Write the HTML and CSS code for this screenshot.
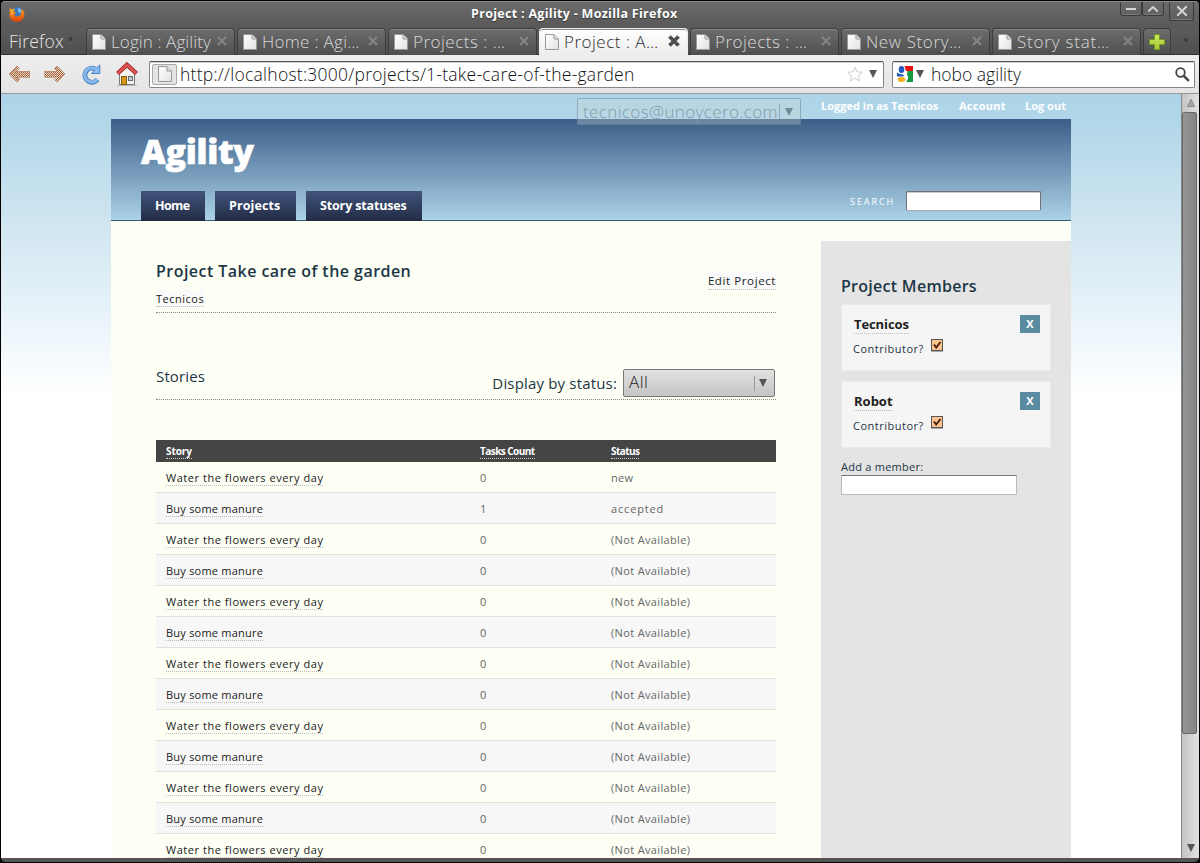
FILE: index.html
```html
<!DOCTYPE html>
<html lang="en">
<head>
<meta charset="utf-8">
<title>Project : Agility</title>
<link rel="stylesheet" href="styles.css">
</head>
<body>
<svg class="defs" width="0" height="0" aria-hidden="true">
  <defs>
    <linearGradient id="paper" x1="0" y1="0" x2="1" y2="1"><stop offset="0" stop-color="#fff"/><stop offset="1" stop-color="#e2e2e2"/></linearGradient>
    <linearGradient id="fox" x1="0" y1="0" x2="0" y2="1"><stop offset="0" stop-color="#f5a623"/><stop offset="1" stop-color="#d8430c"/></linearGradient>
    <linearGradient id="plus" x1="0" y1="0" x2="0" y2="1"><stop offset="0" stop-color="#d0e85c"/><stop offset="1" stop-color="#a4c832"/></linearGradient>
    <pattern id="dither" width="2" height="2" patternUnits="userSpaceOnUse"><rect width="2" height="2" fill="#ead6c6"/><rect width="1" height="1" fill="#a0603c"/><rect x="1" y="1" width="1" height="1" fill="#a0603c"/></pattern>
    <symbol id="page" viewBox="0 0 14 16"><path d="M.5.5h8.500l4.500 4.500v10.500H.5z" fill="url(#paper)" stroke="#999"/><path d="M9 .5V5h4.500" fill="#ddd" stroke="#999"/></symbol>
    <symbol id="close" viewBox="0 0 10 10"><path d="M1 1l8 8M9 1L1 9" stroke="#858585" stroke-width="2.200" fill="none"/></symbol>
    <symbol id="down" viewBox="0 0 8 8"><path d="M0 0h8L4 8z"/></symbol>
    <symbol id="check" viewBox="0 0 12 13"><rect x=".5" y=".5" width="11" height="11" fill="#ffc28c" stroke="#555"/><path d="M0 12.500h12" stroke="#aaa"/><path d="M3 5.500l2.200 3L9.500 3" fill="none" stroke="#3a1a08" stroke-width="1.700"/></symbol>
  </defs>
</svg>
<div class="window">
  <header class="titlebar">
    <svg class="fox" width="16" height="16" viewBox="0 0 16 16"><circle cx="8.500" cy="7" r="6" fill="#3a78c0"/><path d="M9 2c3 0 4 3 3 5l-3-1z" fill="#7db8ea"/><path d="M.8 2l2 1.500c1-1 2.200-1 3-.5L5 5.500 7.500 7 5.500 8c0 2 2.500 3 4.500 2 2-1 2.500-3 2-5L13 3c2 2 3 5 2 8-1 3-4 5-7 5-5 0-8-4-7.500-8.500z" fill="url(#fox)"/><path d="M2 4l1.500 3-1 2" stroke="#ffce4a" fill="none"/></svg>
    <span class="window-title">Project : Agility - Mozilla Firefox</span>
    <div class="window-buttons">
      <span class="wbtn"><svg width="10" height="10" viewBox="0 0 10 10"><path d="M0 5h10"/></svg></span><span class="wbtn"><svg width="10" height="10" viewBox="0 0 10 10"><path d="M0 7.500l5-4.500 5 4.500"/></svg></span><span class="wbtn wclose"><svg width="10" height="10" viewBox="0 0 10 10"><path d="M0 0l10 10M10 0L0 10"/></svg></span>
    </div>
  </header>
  <nav class="tabs">
    <span class="menu"><span class="menu-label">Firefox</span><svg width="7" height="6" viewBox="0 0 8 8" preserveAspectRatio="none" fill="#3a3a3a" stroke="#777" stroke-width=".6"><use href="#down"/></svg></span>
    <div class="tab"><svg class="doc" width="14" height="16"><use href="#page"/></svg><span class="tab-label t1">Login : Agility</span><svg class="x" width="10" height="10"><use href="#close"/></svg></div>
    <div class="tab"><svg class="doc" width="14" height="16"><use href="#page"/></svg><span class="tab-label t2">Home : Agi…</span><svg class="x" width="10" height="10"><use href="#close"/></svg></div>
    <div class="tab"><svg class="doc" width="14" height="16"><use href="#page"/></svg><span class="tab-label t3">Projects : …</span><svg class="x" width="10" height="10"><use href="#close"/></svg></div>
    <div class="tab active"><svg class="doc" width="14" height="16"><use href="#page"/></svg><span class="tab-label t4">Project : A…</span><svg class="x" width="12" height="12" viewBox="0 0 12 12"><path d="M1.500 1.500l9 9M10.500 1.500l-9 9" stroke="#505050" stroke-width="3.800"/></svg></div>
    <div class="tab"><svg class="doc" width="14" height="16"><use href="#page"/></svg><span class="tab-label t3">Projects : …</span><svg class="x" width="10" height="10"><use href="#close"/></svg></div>
    <div class="tab"><svg class="doc" width="14" height="16"><use href="#page"/></svg><span class="tab-label t6">New Story…</span><svg class="x" width="10" height="10"><use href="#close"/></svg></div>
    <div class="tab"><svg class="doc" width="14" height="16"><use href="#page"/></svg><span class="tab-label t7">Story stat…</span><svg class="x" width="10" height="10"><use href="#close"/></svg></div>
    <div class="newtab"><svg width="16" height="16" viewBox="0 0 16 16"><path d="M5.500.5h5v5h5v5h-5v5h-5v-5h-5v-5h5z" fill="url(#plus)" stroke="#6f9a1c"/></svg></div>
    <svg class="alltabs" width="8" height="6" viewBox="0 0 8 8" preserveAspectRatio="none" fill="#3c3c3c" stroke="#777" stroke-width=".6"><use href="#down"/></svg>
  </nav>
  <div class="toolbar">
    <svg class="back" width="22" height="18" viewBox="0 0 22 18" shape-rendering="crispEdges"><path d="M.7 9L9 .7l2.500 2.500L9 6h12.500v6H9l2.500 2.800L9 17.300z" fill="url(#dither)" stroke="#b98a6c" stroke-width=".7"/></svg>
    <svg class="fwd" width="22" height="18" viewBox="0 0 22 18" shape-rendering="crispEdges"><path d="M21.300 9L13 .7l-2.500 2.500L13 6H.5v6H13l-2.500 2.800L13 17.300z" fill="url(#dither)" stroke="#b98a6c" stroke-width=".7"/></svg>
    <svg class="reload" width="20" height="21" viewBox="0 0 20 21"><path d="M14.500 5.200A7 7 0 1 0 16.500 15.500" fill="none" stroke="#4a82c4" stroke-width="5"/><path d="M18.800 .8v8.700h-8.300z" fill="#8bbdf0" stroke="#4a82c4"/><path d="M15 5.500A7 7 0 1 0 16.200 15.200" fill="none" stroke="#86b6ea" stroke-width="3.200"/></svg>
    <svg class="home" width="22" height="24" viewBox="0 0 22 24"><path d="M3.500 11L11 4l7.500 7v11.500h-15z" fill="#f2f2ee" stroke="#777"/><path d="M1 23.500h20" stroke="#bbb"/><rect x="5.500" y="14.500" width="5" height="8" fill="#d49a1e" stroke="#8a5c0c"/><rect x="12.500" y="14.500" width="4" height="4" fill="#b8cede" stroke="#666"/><path d="M1.500 11.500L11 2.800l9.500 8.700" fill="none" stroke="#a42424" stroke-width="4.400"/><path d="M1.500 11.500L11 2.800l9.500 8.700" fill="none" stroke="#da5454" stroke-width="2.800"/></svg>
    <div class="urlbar">
      <span class="identity"><svg width="14" height="16"><use href="#page"/></svg></span>
      <span class="url">http://localhost:3000/projects/1-take-care-of-the-garden</span>
      <svg class="star" width="16" height="16" viewBox="0 0 16 16"><path d="M8 1l2.100 4.800 5.200.5-3.900 3.500 1.100 5.200L8 12.300 3.500 15l1.100-5.200L.7 6.300l5.200-.5z" fill="#fff" stroke="#ccc"/></svg>
      <svg class="drop" width="8" height="8" fill="#555"><use href="#down"/></svg>
    </div>
    <div class="searchbar">
      <svg width="16" height="16" viewBox="0 0 16 16"><path d="M0 0h16v16H0z" fill="#fff"/><path d="M7.500 0H16v5H9z" fill="#e11"/><path d="M10.500 5H16v11H9c2.500-3 2.500-5 1-7.500z" fill="#159a42"/><ellipse cx="4.500" cy="3.500" rx="2.800" ry="3.500" fill="#2159bd"/><path d="M0 6.500c3 2.500 6 1 7.500 3.500L5 10.500H0z" fill="#2159bd"/><ellipse cx="4.500" cy="13.500" rx="3.800" ry="2.500" fill="#f2ad17"/></svg>
      <svg class="engine-drop" width="8" height="8" fill="#555"><use href="#down"/></svg>
      <span class="query">hobo agility</span>
      <svg class="lens" width="15" height="15" viewBox="0 0 15 15"><circle cx="5.500" cy="5.500" r="4.300" fill="#fff" stroke="#444" stroke-width="1.800"/><path d="M8.800 8.800l5 5" stroke="#444" stroke-width="2.600"/></svg>
    </div>
  </div>
  <div class="viewport">
    <div class="page">
      <div class="container">
        <div class="account">
          <div class="user-select"><span class="user-name">tecnicos@unoycero.com</span><i></i><svg width="8" height="8" fill="#6d8c9c"><use href="#down"/></svg></div>
          <a class="logged">Logged in as Tecnicos</a><a class="acct">Account</a><a class="logout">Log out</a>
        </div>
        <header class="banner">
          <h1>Agility</h1>
          <div class="nav">
            <a class="n1"><span>Home</span></a><a class="n2"><span>Projects</span></a><a class="n3"><span>Story statuses</span></a>
            <label>SEARCH</label><span class="search-input"></span>
          </div>
        </header>
        <div class="body">
          <main>
            <div class="heading">
              <div><h2>Project Take care of the garden</h2><a class="owner link">Tecnicos</a></div>
              <a class="edit link">Edit Project</a>
            </div>
            <div class="stories">
              <h3>Stories</h3>
              <span class="filter">Display by status:</span>
              <div class="select"><span>All</span><i></i><svg width="8" height="8" fill="#555"><use href="#down"/></svg></div>
            </div>
            <div class="table">
              <div class="row head"><span><b class="h1">Story</b></span><span><b class="h2">Tasks Count</b></span><span><b class="h3">Status</b></span></div>
              <div class="row"><span><a class="water">Water the flowers every day</a></span><span>0</span><span class="new">new</span></div>
              <div class="row"><span><a class="buy">Buy some manure</a></span><span>1</span><span class="acc">accepted</span></div>
              <div class="row"><span><a class="water">Water the flowers every day</a></span><span>0</span><span>(Not Available)</span></div>
              <div class="row"><span><a class="buy">Buy some manure</a></span><span>0</span><span>(Not Available)</span></div>
              <div class="row"><span><a class="water">Water the flowers every day</a></span><span>0</span><span>(Not Available)</span></div>
              <div class="row"><span><a class="buy">Buy some manure</a></span><span>0</span><span>(Not Available)</span></div>
              <div class="row"><span><a class="water">Water the flowers every day</a></span><span>0</span><span>(Not Available)</span></div>
              <div class="row"><span><a class="buy">Buy some manure</a></span><span>0</span><span>(Not Available)</span></div>
              <div class="row"><span><a class="water">Water the flowers every day</a></span><span>0</span><span>(Not Available)</span></div>
              <div class="row"><span><a class="buy">Buy some manure</a></span><span>0</span><span>(Not Available)</span></div>
              <div class="row"><span><a class="water">Water the flowers every day</a></span><span>0</span><span>(Not Available)</span></div>
              <div class="row"><span><a class="buy">Buy some manure</a></span><span>0</span><span>(Not Available)</span></div>
              <div class="row"><span><a class="water">Water the flowers every day</a></span><span>0</span><span>(Not Available)</span></div>
            </div>
          </main>
          <aside>
            <h2 class="members">Project Members</h2>
            <div class="card">
              <div class="card-top"><a class="m1">Tecnicos</a><span class="remove">X</span></div>
              <div class="card-sub"><span class="contrib">Contributor?</span><svg width="12" height="13"><use href="#check"/></svg></div>
            </div>
            <div class="card second">
              <div class="card-top"><a class="m2">Robot</a><span class="remove">X</span></div>
              <div class="card-sub"><span class="contrib">Contributor?</span><svg width="12" height="13"><use href="#check"/></svg></div>
            </div>
            <label class="add">Add a member:</label>
            <div class="add-input"></div>
          </aside>
        </div>
      </div>
    </div>
    <div class="scrollbar">
      <svg class="up" width="8" height="8" viewBox="0 0 8 8"><path d="M4 .5L7.500 7.500h-7z" fill="#aaa" stroke="#888"/></svg>
      <div class="thumb"></div>
      <svg class="dn" width="8" height="8" fill="#555"><use href="#down"/></svg>
    </div>
  </div>
</div>
</body>
</html>
```

FILE: styles.css
```css
* { box-sizing: border-box; }
html, body { margin: 0; height: 863px; overflow: hidden; background: #000; }
body { font-family: "Open Sans", "Noto Sans", sans-serif; }
svg { display: block; flex: none; }
.defs { position: absolute; }
h1, h2, h3 { margin: 0; }
span, a, label, b { white-space: nowrap; }

.window { width: 1200px; height: 862px; display: flex; flex-direction: column; background: #555; border: 1px solid #000; border-bottom: 0; border-radius: 5px; overflow: hidden; }

/* Window chrome */
.titlebar { height: 27px; flex: none; display: flex; align-items: flex-start; background: linear-gradient(#6b6b6b, #585858); border-top: 1px solid #8c8c8c; }
.fox { margin: 4px 0 0 8px; }
.window-title { width: 208px; margin: 3px 0 0 446px; color: #fff; font-size: 12.500px; line-height: 17px; font-weight: 700; letter-spacing: .3px; text-shadow: 0 1px 1px #333; }
.window-buttons { margin-left: auto; display: flex; padding-right: 5px; }
.wbtn { width: 22px; height: 14px; border: 1px solid #3a3a3a; border-top: 0; border-radius: 0 0 3px 3px; display: flex; align-items: center; justify-content: center; box-shadow: inset 0 -1px #7d7d7d; }
.wbtn svg { fill: none; stroke: #d5d5d5; stroke-width: 2; }
.wclose { width: 25px; height: 19px; margin-left: 5px; }

.tabs { height: 27px; flex: none; display: flex; background: linear-gradient(#5c5c5c, #4e4e4e); border-bottom: 1px solid #303030; font-weight: 300; font-size: 17px; }
.menu { width: 85px; padding-left: 8px; display: flex; align-items: center; color: #e6e6e6; }
.menu-label { width: 58px; line-height: 24px; font-size: 17.500px; letter-spacing: .2px; }
.menu svg { margin-bottom: 3px; }
.tab { width: 149px; height: 27px; flex: none; margin-right: 2px; padding: 0 7px 0 5px; display: flex; align-items: center; border: 1px solid #3c3c3c; border-bottom: 0; border-radius: 4px 4px 0 0; background: linear-gradient(#6d6d6d, #4e4e4e); color: #d8d8d8; box-shadow: inset 0 1px #868686; }
.tab-label { margin-left: 5px; line-height: 24px; }
.t1 { letter-spacing: .1px; } .t2 { letter-spacing: .3px; } .t3 { letter-spacing: .5px; } .t4 { letter-spacing: .5px; } .t6 { letter-spacing: .6px; } .t7 { letter-spacing: .8px; }
.tab .x { margin-left: auto; margin-bottom: 2px; }
.tab.active { background: linear-gradient(#fff, #ededed); color: #2c2c2c; border-color: #eee; }
.newtab { width: 28px; height: 26px; border: 1px solid #3c3c3c; border-bottom: 0; border-radius: 4px 4px 0 0; background: linear-gradient(#6d6d6d, #4e4e4e); display: flex; align-items: center; justify-content: center; }
.alltabs { margin: 10px 0 0 11px; }

.toolbar { height: 39px; flex: none; display: flex; align-items: center; background: linear-gradient(#eee, #e4e4e4); border-bottom: 1px solid #999; padding-left: 7px; }
.fwd { margin-left: 14px; }
.reload { margin-left: 15px; }
.home { margin-left: 15px; }
.urlbar, .searchbar { height: 27px; display: flex; align-items: center; background: #fff; border: 1px solid #848484; border-top: 1px solid #555; border-radius: 2px; box-shadow: inset 0 1px #ccc; }
.urlbar { width: 735px; margin-left: 11px; padding: 0 6px 0 2px; }
.identity { width: 25px; height: 21px; border: 1px solid #aaa; border-radius: 2px; background: #e4e4e4; display: flex; align-items: center; justify-content: center; }
.url, .query { font-size: 17.500px; line-height: 24px; color: #111; font-weight: 300; }
.url { margin-left: 3px; letter-spacing: .25px; }
.star { margin-left: auto; }
.drop { margin-left: 6px; }
.searchbar { width: 303px; margin-left: 8px; padding: 0 4px; }
.engine-drop { margin-left: 3px; }
.query { margin-left: 7px; }
.lens { margin-left: auto; }

.viewport { flex: 1; min-height: 0; display: flex; overflow: hidden; max-height: 764px; }
.page { width: 1180px; flex: none; background: linear-gradient(#acd3e8 0, #b2d7e9 30px, #d5e8f2 146px, #e9f4fa 225px, #fff 300px); padding-left: 110px; overflow: hidden; }
.container { width: 960px; }

/* Account bar */
.account { height: 25px; display: flex; position: relative; color: #fff; font-size: 11px; font-weight: 700; line-height: 24px; }
.logged { margin-left: 710px; width: 138px; }
.acct { width: 66px; letter-spacing: .25px; }
.user-select { position: absolute; left: 466px; top: 4px; width: 224px; height: 27px; padding: 0 7px 0 5px; display: flex; align-items: center; border: 1px solid rgba(80,110,130,.4); border-radius: 2px; background: rgba(205,215,215,.32); color: #7c9bad; font-size: 17px; font-weight: 300; letter-spacing: .38px; }
.user-select i { width: 1px; height: 15px; margin-left: auto; margin-right: 5px; background: #8ba8b7; }

.banner { height: 102px; padding: 0 30px; background: linear-gradient(#3b5e88, #abd2e7); border-bottom: 1px solid #3b5c70; }
h1 { height: 72px; padding-top: 12px; color: #fff; font-size: 34px; line-height: 40px; font-weight: 800; letter-spacing: -.3px; -webkit-text-stroke: .6px #fff; }
.nav { display: flex; height: 30px; }
.nav a { height: 30px; margin-right: 10px; padding-left: 14px; line-height: 29px; color: #fff; font-size: 12.500px; font-weight: 700; background: linear-gradient(#41547c, #222b44); }
.n1 { width: 64px; letter-spacing: -.6px; } .n2 { width: 81px; letter-spacing: .1px; } .n3 { width: 116px; letter-spacing: -.15px; }
.nav label { margin-left: auto; margin-right: 11px; color: #fff; font-size: 9px; letter-spacing: 1.900px; line-height: 21px; }
.search-input { width: 135px; height: 20px; background: #fff; border: 1px solid #707070; border-bottom-color: #aaa; border-radius: 2px; box-shadow: inset 0 1px #ccc; }

.body { display: flex; background: #fdfff5; height: 637px; color: #1c3645; font-size: 11px; }
main { width: 620px; margin: 0 45px; }
.heading { height: 92px; padding-top: 38px; display: flex; justify-content: space-between; border-bottom: 1px dotted #888; }
h2 { font-size: 16px; line-height: 24px; font-weight: 600; letter-spacing: .46px; }
.members { letter-spacing: .28px; }
.link { color: #222; border-bottom: 1px dotted #bbb; line-height: 17px; display: inline-block; background: #fafafa; }
.heading div { display: flex; flex-direction: column; align-items: flex-start; }
.owner { margin-top: 7px; height: 17px; letter-spacing: .5px; }
.edit { margin-top: 13px; height: 18px; line-height: 18px; font-size: 11.500px; letter-spacing: .6px; }
.stories { height: 87px; display: flex; padding: 56px 1px 0 0; border-bottom: 1px dotted #888; }
h3 { font-size: 15px; font-weight: 400; line-height: 14px; letter-spacing: .15px; }
.filter { margin-left: auto; font-size: 15px; line-height: 28px; margin-right: 6px; letter-spacing: .17px; }
.select { width: 152px; height: 28px; padding: 0 7px 0 5px; display: flex; align-items: center; border: 1px solid #777; border-radius: 2px; background: linear-gradient(#e2e2e2, #c4c4c4); color: #222; font-size: 17px; line-height: 24px; font-weight: 300; }
.select span { margin-bottom: 2px; letter-spacing: .5px; }
.select i { width: 1px; height: 15px; background: #999; margin-left: auto; margin-right: 4px; }

.table { margin-top: 40px; color: #666; letter-spacing: .35px; }
.row { height: 31px; display: grid; grid-template-columns: 314px 131px 1fr; padding-left: 10px; line-height: 31px; border-bottom: 1px solid #e0e0e0; }
.row:nth-child(odd) { background: #f7f7f7; }
.row a { color: #222; border-bottom: 1px dotted #bbb; }
.water { letter-spacing: .54px; }
.buy { letter-spacing: .23px; }
.acc { letter-spacing: .85px; }
.row.head { height: 22px; line-height: 23px; background: #444; border: 0; color: #fff; font-size: 10px; letter-spacing: -.1px; }
.head b { border-bottom: 1px dotted #ccc; }
.head .h2, .head .h3 { letter-spacing: -.55px; }

aside { width: 250px; margin-top: 20px; padding: 33px 20px 0; background: #e4e4e4; }
.card { width: 210px; height: 67px; padding: 10px 10px 0 12px; margin-top: 6px; background: #f5f5f5; border: 1px solid #eaeaea; }
.card.second { margin-top: 10px; }
.card-top { display: flex; justify-content: space-between; height: 18px; color: #222; font-size: 13px; font-weight: 700; line-height: 18px; }
.card-top a { height: 19px; line-height: 19px; border-bottom: 1px dotted #bbb; }
.m1 { letter-spacing: -.1px; }
.remove { width: 20px; height: 18px; background: #5b8ba1; color: #fff; text-align: center; font-size: 11px; }
.card-sub { display: flex; margin: 6px 0 0 -1px; line-height: 20px; }
.contrib { width: 78px; letter-spacing: .5px; }
.add { display: block; margin-top: 11px; line-height: 16px; letter-spacing: .25px; }
.add-input { width: 176px; height: 20px; background: #fff; border: 1px solid #bbb; border-top-color: #777; }

.scrollbar { width: 18px; flex: none; display: flex; flex-direction: column; align-items: center; background: linear-gradient(90deg, #c4c4c4, #e2e2e2); border-left: 1px solid #888; }
.up { margin-top: 5px; }
.thumb { align-self: flex-start; width: 15px; height: 622px; margin-top: 5px; background: linear-gradient(90deg, #959595, #858585); border: 1px solid #686868; border-radius: 2px; }
.dn { margin-top: auto; margin-bottom: 6px; }
```
